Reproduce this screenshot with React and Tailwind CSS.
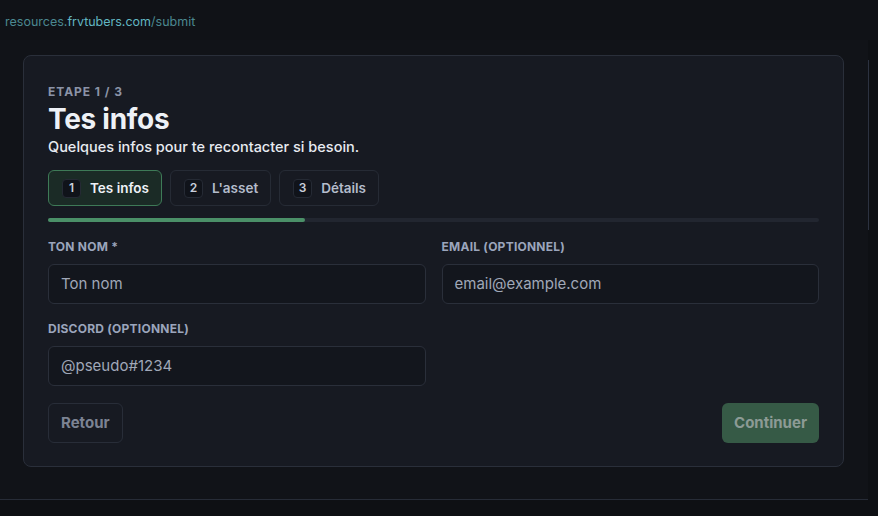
import React from 'react';

const steps = [
    { n: 1, label: 'Tes infos', active: true },
    { n: 2, label: "L'asset" },
    { n: 3, label: 'Détails' },
];

export default function App() {
    return (
        <div className="w-[878px] h-[516px] bg-[#0e1014] overflow-hidden" style={{ fontFamily: 'Inter, "Noto Sans", sans-serif' }}>
            {/* address bar */}
            <div className="h-10 flex items-start pt-[14px] px-[5px] bg-[#101217] text-[12.5px] leading-4 text-[#4b8890]">
                <span>resources.</span>
                <span className="text-[#62b6c2]">frvtubers.com</span>
                <span>/submit</span>
            </div>

            <div className="flex">
                <div className="w-[868px] h-[460px] bg-[#111318] border-b border-[#272c37] pt-[15px] pl-[23px] pr-[24px]">
                    <div className="h-[412px] rounded-lg border border-[#2a2f3a] bg-[#171a22] px-6 pt-[28px]">
                        <p className="text-[12px] font-bold tracking-[0.08em] text-[#8b93a7] leading-4">ETAPE 1 / 3</p>
                        <h1 className="text-[28px] font-bold text-[#eef1f6] leading-8 mt-[3px] tracking-[-0.01em]">Tes infos</h1>
                        <p className="text-[14.5px] font-medium text-[#e8ebf1] leading-5 mt-[2px]">Quelques infos pour te recontacter si besoin.</p>

                        <div className="flex gap-2 mt-[13px]">
                            {steps.map((s) => (
                                <div
                                    key={s.n}
                                    className={
                                        s.active
                                            ? 'h-9 flex items-center gap-[9px] pl-[13px] pr-[12px] rounded-md border border-[#3e7a57] bg-[#1b2b26]'
                                            : 'h-9 flex items-center gap-[9px] pl-[13px] pr-[12px] rounded-md border border-[#262b35]'
                                    }
                                >
                                    <span className="w-[19px] h-[19px] flex items-center justify-center rounded-[4px] bg-[#10131a] border border-[#252a34] text-[12px] font-semibold text-[#c9cfdb]">
                                        {s.n}
                                    </span>
                                    <span className={s.active ? 'text-[13.5px] font-semibold text-[#eef1f6]' : 'text-[13.5px] font-semibold text-[#b4bccb]'}>
                                        {s.label}
                                    </span>
                                </div>
                            ))}
                        </div>

                        <div className="mt-3 h-1 rounded-full bg-[#222630]">
                            <div className="h-1 w-[257px] rounded-full bg-[#4b9068]" />
                        </div>

                        <div className="grid grid-cols-2 gap-x-4 mt-[17px]">
                            <Field label="TON NOM *" placeholder="Ton nom" />
                            <Field label="EMAIL (OPTIONNEL)" placeholder="email@example.com" />
                        </div>
                        <div className="grid grid-cols-2 gap-x-4 mt-[17px]">
                            <Field label="DISCORD (OPTIONNEL)" placeholder="@pseudo#1234" />
                        </div>

                        <div className="flex justify-between mt-[17px]">
                            <button className="h-10 px-3 rounded-md border border-[#282d38] text-[15px] font-bold text-[#7c8393]">Retour</button>
                            <button className="h-10 px-3 rounded-md bg-[#365a46] text-[15px] font-bold text-[#8c9b95]">Continuer</button>
                        </div>
                    </div>
                </div>
                <div className="w-px pt-5">
                    <div className="w-px h-[170px] bg-[#2c3240]" />
                </div>
            </div>
        </div>
    );
}

function Field({ label, placeholder }) {
    return (
        <div>
            <p className="text-[12px] font-bold tracking-[0.02em] text-[#9ba5bc] leading-4">{label}</p>
            <div className="mt-[9px] h-10 rounded-md border border-[#2a2f3a] bg-[#13161d] flex items-center px-3 text-[15px] text-[#a0a8b8]">
                {placeholder}
            </div>
        </div>
    );
}
